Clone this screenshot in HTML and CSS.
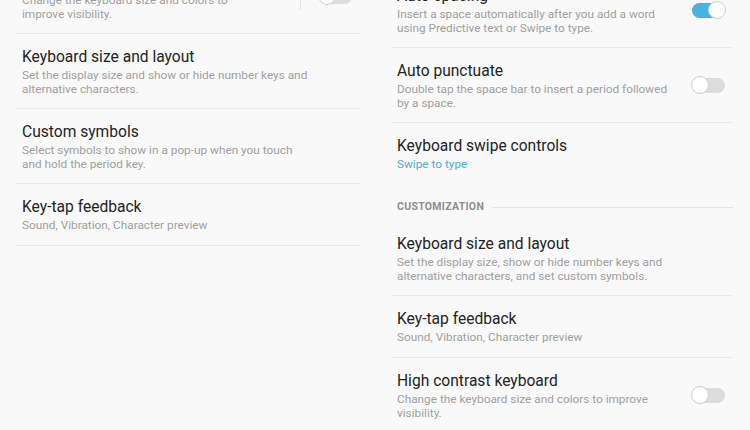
FILE: index.html
```html
<!DOCTYPE html>
<html>
<head>
<meta charset="utf-8">
<link rel="stylesheet" href="styles.css">
</head>
<body>
<div class="page">
  <div class="col col-left">
    <div class="item">
      <div class="text">
        <div class="title">High contrast keyboard</div>
        <div class="sub">Change the keyboard size and colors to<br>improve visibility.</div>
      </div>
      <span class="vsep"></span>
      <span class="switch"></span>
    </div>
    <div class="item">
      <div class="text">
        <div class="title">Keyboard size and layout</div>
        <div class="sub">Set the display size and show or hide number keys and<br>alternative characters.</div>
      </div>
    </div>
    <div class="item">
      <div class="text">
        <div class="title">Custom symbols</div>
        <div class="sub">Select symbols to show in a pop-up when you touch<br>and hold the period key.</div>
      </div>
    </div>
    <div class="item item-one">
      <div class="text">
        <div class="title">Key-tap feedback</div>
        <div class="sub">Sound, Vibration, Character preview</div>
      </div>
    </div>
  </div>
  <div class="col col-right">
    <div class="item">
      <div class="text">
        <div class="title">Auto spacing</div>
        <div class="sub">Insert a space automatically after you add a word<br>using Predictive text or Swipe to type.</div>
      </div>
      <span class="switch on"></span>
    </div>
    <div class="item">
      <div class="text">
        <div class="title">Auto punctuate</div>
        <div class="sub">Double tap the space bar to insert a period followed<br>by a space.</div>
      </div>
      <span class="switch"></span>
    </div>
    <div class="item item-one item-plain">
      <div class="text">
        <div class="title">Keyboard swipe controls</div>
        <div class="sub link">Swipe to type</div>
      </div>
    </div>
    <div class="header">
      <span class="header-text">CUSTOMIZATION</span>
      <span class="header-line"></span>
    </div>
    <div class="item">
      <div class="text">
        <div class="title">Keyboard size and layout</div>
        <div class="sub">Set the display size, show or hide number keys and<br>alternative characters, and set custom symbols.</div>
      </div>
    </div>
    <div class="item item-one">
      <div class="text">
        <div class="title">Key-tap feedback</div>
        <div class="sub">Sound, Vibration, Character preview</div>
      </div>
    </div>
    <div class="item item-plain">
      <div class="text">
        <div class="title">High contrast keyboard</div>
        <div class="sub">Change the keyboard size and colors to improve<br>visibility.</div>
      </div>
      <span class="switch"></span>
    </div>
  </div>
</div>
</body>
</html>
```
FILE: styles.css
```css
html, body {
  margin: 0;
  padding: 0;
  background: #f9f9f9;
  overflow: hidden;
}
body {
  width: 750px;
  height: 430px;
  font-family: Roboto, "Noto Sans", sans-serif;
}
.page {
  display: grid;
  grid-template-columns: 344px 342px;
  column-gap: 31px;
  padding-left: 16px;
  align-items: start;
}
.col-left {
  margin-top: -41px;
}
.col-right {
  margin-top: -27px;
}
.item {
  display: flex;
  align-items: center;
  padding: 13px 6px 12px 6px;
  border-bottom: 1px solid #eaeaea;
}
.item-one {
  padding-bottom: 13px;
}
.item-plain {
  border-bottom: none;
}
.text {
  flex: 1;
  min-width: 0;
}
.title {
  font-size: 15.6px;
  line-height: 20px;
  color: #232323;
  margin-bottom: 1px;
  white-space: nowrap;
}
.sub {
  font-size: 11.8px;
  line-height: 14px;
  color: #a0a0a0;
  white-space: nowrap;
}
.sub.link {
  color: #55a9cf;
}
.vsep {
  width: 1px;
  height: 26px;
  background: #e4e4e4;
  margin-right: 17px;
}
.switch {
  position: relative;
  width: 34px;
  height: 19px;
  margin-right: 2px;
  flex: none;
}
.switch::before {
  content: "";
  position: absolute;
  left: 1px;
  right: 0;
  top: 2px;
  height: 15px;
  border-radius: 8px;
  background: #dcdcdc;
}
.switch::after {
  content: "";
  position: absolute;
  left: 0;
  top: 0;
  width: 16px;
  height: 16px;
  border-radius: 50%;
  background: #ffffff;
  border: 1.5px solid #cfcfcf;
}
.switch.on::before {
  background: #47b4e0;
}
.switch.on::after {
  left: auto;
  right: -1px;
}
.header {
  display: flex;
  align-items: center;
  padding: 16px 0 7px 6px;
}
.header-text {
  font-size: 10.5px;
  line-height: 14px;
  font-weight: 700;
  color: #8e8e8e;
  letter-spacing: 0.3px;
}
.header-line {
  flex: 1;
  height: 1px;
  background: #e4e4e4;
  margin-left: 8px;
}
```
